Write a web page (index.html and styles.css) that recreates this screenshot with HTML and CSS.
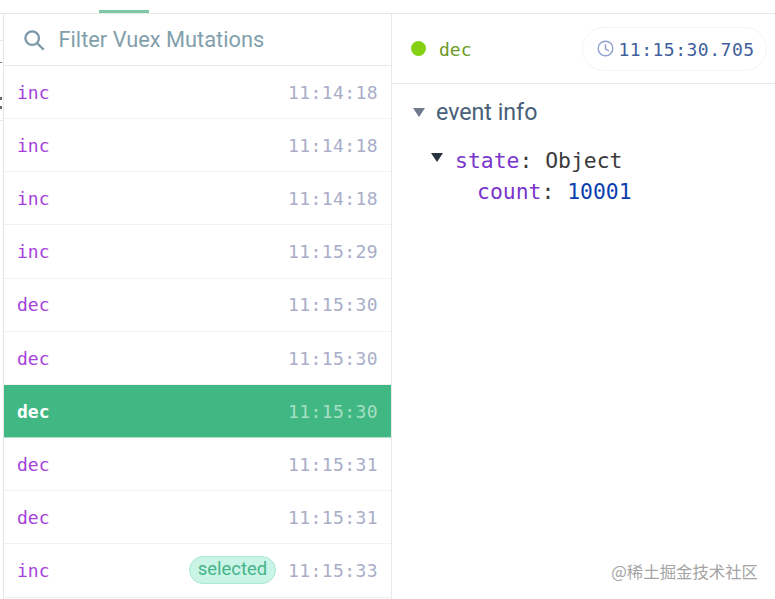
FILE: index.html
```html
<!DOCTYPE html>
<html lang="en">
<head>
  <meta charset="UTF-8">
  <title>Vuex Mutations</title>
  <link rel="stylesheet" href="styles.css">
</head>
<body>
  <div class="tabs">
    <div class="tab-marker"></div>
  </div>
  <div class="main">
    <div class="edge">
      <div class="edge-line">
        <div class="edge-dot"></div>
        <div class="edge-mark"></div>
        <div class="edge-mark low"></div>
      </div>
    </div>
    <div class="list">
      <div class="search">
        <svg class="search-icon" width="22" height="22" viewBox="0 0 24 24" fill="none" stroke="#7d99a8" stroke-width="2.5">
          <circle cx="10" cy="10" r="7.4"/>
          <path d="M15.4 15.4L22.6 22.6"/>
        </svg>
        <span>Filter Vuex Mutations</span>
      </div>
      <div class="row"><span class="name">inc</span><span class="time">11:14:18</span></div>
      <div class="row"><span class="name">inc</span><span class="time">11:14:18</span></div>
      <div class="row"><span class="name">inc</span><span class="time">11:14:18</span></div>
      <div class="row"><span class="name">inc</span><span class="time">11:15:29</span></div>
      <div class="row"><span class="name">dec</span><span class="time">11:15:30</span></div>
      <div class="row"><span class="name">dec</span><span class="time">11:15:30</span></div>
      <div class="row active"><span class="name">dec</span><span class="time">11:15:30</span></div>
      <div class="row"><span class="name">dec</span><span class="time">11:15:31</span></div>
      <div class="row"><span class="name">dec</span><span class="time">11:15:31</span></div>
      <div class="row"><span class="name">inc</span><span class="badge">selected</span><span class="time">11:15:33</span></div>
    </div>
    <div class="inspector">
      <div class="event-head">
        <span class="dot"></span>
        <span class="event-name">dec</span>
        <div class="pill">
          <svg width="17" height="17" viewBox="0 0 17 17" fill="none" stroke="#8f9fd0" stroke-width="1.4">
            <circle cx="8.5" cy="8.5" r="7.3"/>
            <path d="M8.5 4.2V9L12 11"/>
          </svg>
          <span class="pill-time">11:15:30.705</span>
        </div>
      </div>
      <div class="section-title">
        <span class="arrow"></span>
        <span>event info</span>
      </div>
      <div class="tree">
        <div class="tree-line">
          <span class="tree-arrow"></span>
          <span class="key">state</span><span class="plain">: Object</span>
        </div>
        <div class="tree-line child">
          <span class="key">count</span><span class="plain">: </span><span class="num">10001</span>
        </div>
      </div>
    </div>
  </div>
  <div class="watermark">@稀土掘金技术社区</div>
</body>
</html>
```

FILE: styles.css
```css
html, body {
  height: 100%;
}
body {
  margin: 0;
  overflow: hidden;
  background-color: white;
  font-family: Roboto, sans-serif;
}
.tabs {
  height: 13px;
  display: flex;
  align-items: flex-end;
  padding-left: 99px;
  box-sizing: content-box;
  border-bottom: 1px solid #e6e8e8;
}
.tab-marker {
  width: 50px;
  height: 3px;
  background-color: #7cc7a6;
}
.main {
  display: flex;
  height: 585px;
}
.edge {
  width: 3px;
  padding-top: 26px;
}
.edge-line {
  height: 79px;
  border-top: 1px solid #e6e8e8;
  border-bottom: 1px solid #e6e8e8;
}
.edge-dot {
  width: 2px;
  height: 1px;
  margin-top: 21px;
  background-color: #777;
}
.edge-mark {
  width: 2px;
  height: 3px;
  margin-top: 34px;
  background-color: #666;
}
.edge-mark.low {
  margin-top: 6px;
}

/* mutation list */
.list {
  width: 387px;
  border-left: 1px solid #e4e6e6;
  border-right: 1px solid #e8eaea;
}
.search {
  height: 51px;
  display: flex;
  align-items: center;
  gap: 13.5px;
  padding-left: 19px;
  border-bottom: 1px solid #e8eaea;
  color: #82a0ac;
  font-size: 21.8px;
}
.row {
  height: 51.77px;
  padding: 0.4px 13px 0 13px;
  display: flex;
  align-items: center;
  border-bottom: 1px solid #f1f2f2;
  font-family: "DejaVu Sans Mono", monospace;
  font-size: 18px;
}
.name {
  color: #a63fdc;
  margin-right: auto;
}
.time {
  color: #a9adc8;
  letter-spacing: 0.4px;
}
.badge {
  height: 26px;
  line-height: 23px;
  padding: 0 8px;
  margin: 0 12px 1px 0;
  border: 1px solid #a9e9d2;
  border-radius: 14px;
  background-color: #caf4e6;
  color: #44b48a;
  font-family: Roboto, sans-serif;
  font-size: 18.4px;
}
.active {
  background-color: #41b883;
  border-bottom: 1px solid #a9e0c8;
}
.active .name {
  color: white;
  font-weight: bold;
}
.active .time {
  color: #a5dfc4;
}

/* right side */
.inspector {
  flex: 1;
}
.event-head {
  height: 69px;
  display: flex;
  align-items: center;
  padding-left: 19px;
  border-bottom: 1px solid #e8eaea;
}
.dot {
  width: 15px;
  height: 15px;
  border-radius: 50%;
  background-color: #85d012;
  margin-right: 13px;
}
.event-name {
  margin-top: 2px;
  color: #6b9a26;
  font-family: "DejaVu Sans Mono", monospace;
  font-size: 18px;
}
.pill {
  display: flex;
  align-items: center;
  gap: 5px;
  height: 42px;
  margin-left: 110px;
  padding: 0 11px 0 14px;
  border: 1px solid #f3f4f6;
  border-radius: 22px;
  color: #3f5f9c;
  font-family: "DejaVu Sans Mono", monospace;
  font-size: 18px;
  letter-spacing: 0.5px;
}
.pill-time {
  margin-top: 1px;
}
.section-title {
  display: flex;
  align-items: center;
  gap: 11px;
  padding: 14px 0 0 21px;
  color: #486078;
  font-size: 23.2px;
}
.arrow {
  width: 0;
  height: 0;
  border-left: 6.5px solid transparent;
  border-right: 6.5px solid transparent;
  border-top: 9px solid #6f7a8c;
}
.tree {
  padding: 19px 0 0 39px;
  font-family: "DejaVu Sans Mono", monospace;
  font-size: 21.4px;
  line-height: 31px;
}
.tree-line {
  display: flex;
  align-items: center;
}
.tree-arrow {
  width: 0;
  height: 0;
  margin-right: 12px;
  margin-top: -6px;
  border-left: 6.5px solid transparent;
  border-right: 6.5px solid transparent;
  border-top: 9px solid #29333f;
}
.child {
  padding-left: 46px;
}
.key {
  color: #7a35cc;
}
.plain {
  color: #3a3a3a;
  white-space: pre;
}
.num {
  color: #0b3fb0;
}
.watermark {
  position: absolute;
  right: 17px;
  bottom: 16px;
  color: #a4a4a4;
  font-family: "Noto Sans CJK SC", sans-serif;
  font-size: 16.4px;
}
```
